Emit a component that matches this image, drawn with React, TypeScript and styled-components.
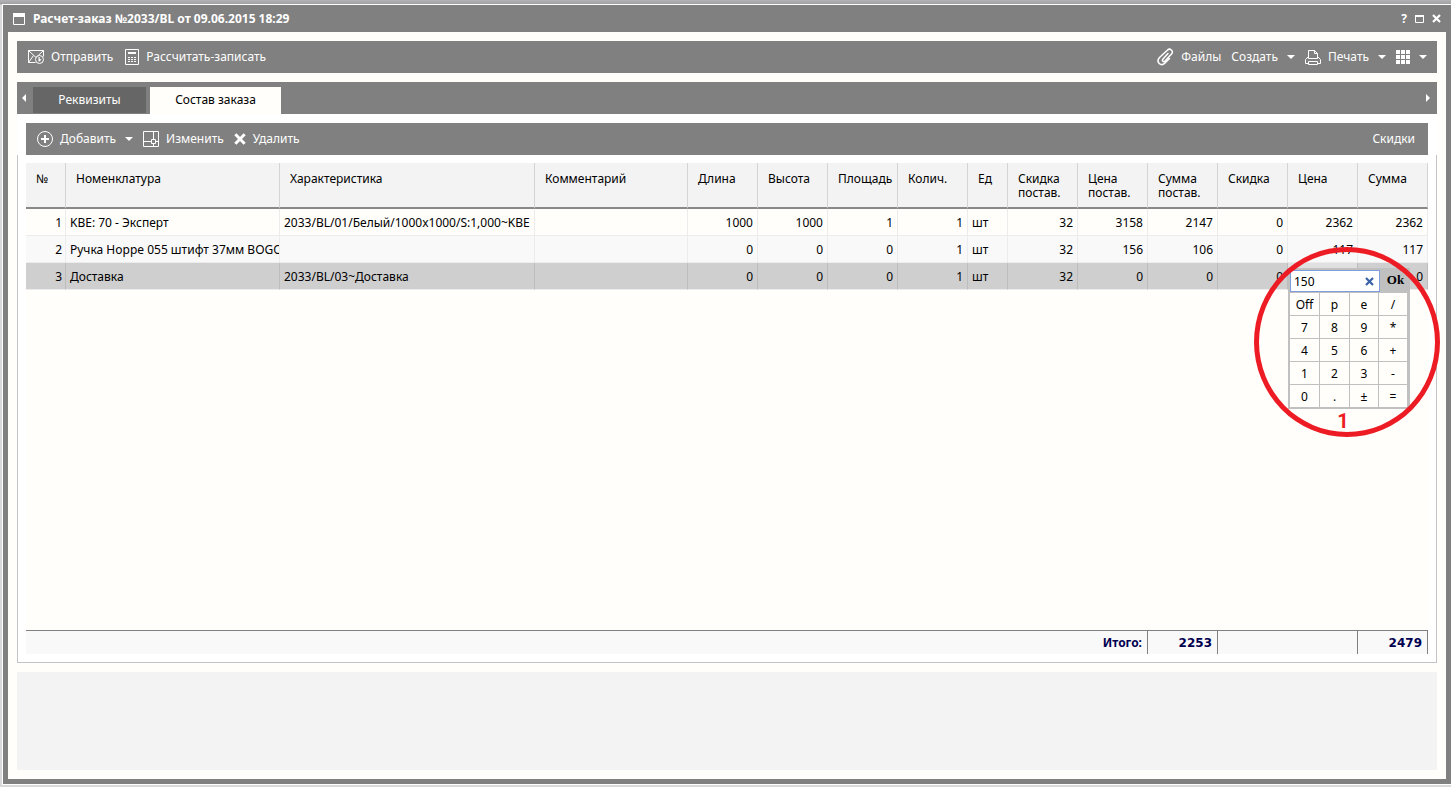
import React, { useState } from "react";
import styled, { createGlobalStyle, css } from "styled-components";

const GlobalStyle = createGlobalStyle`
  * { box-sizing: border-box; }
  html, body { margin: 0; padding: 0; }
  body {
    background: #d9d9db;
    font-family: "Noto Sans", "Open Sans", sans-serif;
    font-size: 12px;
    line-height: 14px;
    color: #000;
  }
  button, input { font: inherit; color: inherit; }
`;

const Desktop = styled.div`
  min-height: 100vh;
  display: flex;
  padding: 4px 0 2px 2px;
  background: linear-gradient(#b4b4b8, #a0a0a0 4px, #d9d9db 5px);
`;

const Window = styled.main`
  flex: 1;
  min-width: 0;
  display: flex;
  flex-direction: column;
  background: #808080;
  border: 1px solid #fff;
  border-right: 0;
  padding: 0 5px 5px;
`;

const TitleBar = styled.header`
  height: 27px;
  display: flex;
  align-items: center;
  gap: 8px;
  padding: 0 5px;
  color: #fff;
`;

const Title = styled.h1`
  flex: 1;
  margin: 0;
  font-size: 12px;
  font-weight: 700;
  line-height: 14px;
`;

const WindowButton = styled.button`
  display: flex;
  padding: 0;
  border: 0;
  background: none;
  color: #fff;
  font-weight: 700;
`;

const Body = styled.div`
  flex: 1;
  display: flex;
  flex-direction: column;
  gap: 9px;
  padding: 9px;
  background: #fffefa;
`;

const Toolbar = styled.div<{ $end?: number }>`
  height: 32px;
  display: flex;
  align-items: center;
  justify-content: space-between;
  padding: 0 ${(p) => p.$end ?? 10}px 0 11px;
  background: #808080;
  color: #fff;
`;

const ToolGroup = styled.div<{ $gap?: number }>`
  display: flex;
  align-items: center;
  gap: ${(p) => p.$gap ?? 10}px;
`;

const ToolButton = styled.button`
  display: flex;
  align-items: center;
  gap: 7px;
  padding: 0;
  border: 0;
  background: none;
  color: #fff;
  white-space: nowrap;
`;

const Caret = styled.span`
  margin-left: 2px;
  border: 4px solid transparent;
  border-top-color: #fff;
  border-bottom: 0;
`;

const Tabs = styled.section`
  flex: 1;
  display: flex;
  flex-direction: column;
`;

const TabStrip = styled.div`
  height: 32px;
  display: flex;
  align-items: flex-end;
  background: #808080;
`;

const TabList = styled.div`
  flex: 1;
  display: flex;
  align-items: flex-end;
  gap: 4px;
`;

const Scroller = styled.button<{ $side: "left" | "right" }>`
  width: 16px;
  height: 32px;
  display: flex;
  align-items: center;
  justify-content: center;
  padding: 0 2px 0 0;
  border: 0;
  background: none;

  &::before {
    content: "";
    border: 4px solid transparent;
    ${(p) =>
      p.$side === "left"
        ? css`border-right-color: #fff; border-left: 0;`
        : css`border-left-color: #fff; border-right: 0;`}
  }
`;

const Tab = styled.button<{ $active?: boolean }>`
  height: ${(p) => (p.$active ? 27 : 26)}px;
  min-width: ${(p) => (p.$active ? 131 : 113)}px;
  margin-bottom: ${(p) => (p.$active ? 0 : 1)}px;
  padding: 0 16px ${(p) => (p.$active ? 2 : 0)}px;
  border: 0;
  background: ${(p) => (p.$active ? "#fffefa" : "#666")};
  color: ${(p) => (p.$active ? "#000" : "#fff")};
`;

const PanelHead = styled.div`
  padding: 9px 9px 0;
  background: #fff;
`;

const PanelBody = styled.div`
  flex: 1;
  display: flex;
  flex-direction: column;
  padding: 8px;
  background: #fff;
  border: 1px solid #c3c3c8;
  border-top: 0;
`;

const GridArea = styled.div`
  flex: 1;
  background: #fffefa;
`;

const Table = styled.table`
  width: 100%;
  table-layout: fixed;
  border-collapse: separate;
  border-spacing: 0;
`;

const Th = styled.th`
  height: 46px;
  padding: 9px 0 0 10px;
  vertical-align: top;
  text-align: left;
  font-weight: 400;
  background: #f3f3f3;
  border-right: 1px solid #d4d4d4;
  border-bottom: 2px solid #888;
`;

const Row = styled.tr<{ $tone: string; $line: string }>`
  background: ${(p) => p.$tone};
  --line: ${(p) => p.$line};
`;

const Td = styled.td<{ $num?: boolean; $editing?: boolean }>`
  position: relative;
  height: 27px;
  padding: 2px 4px 0;
  text-align: ${(p) => (p.$num ? "right" : "left")};
  white-space: nowrap;
  overflow: ${(p) => (p.$editing ? "visible" : "hidden")};
  background: ${(p) => (p.$editing ? "#e0e0e0" : "transparent")};
  border-right: 1px solid var(--line);
  border-bottom: 1px solid #ececec;

  &:first-child { padding-right: 3px; }
`;

const TotalCell = styled.td`
  height: 24px;
  padding: 0 5px;
  text-align: right;
  font-family: "DejaVu Sans", sans-serif;
  font-weight: 700;
  color: #000050;
  background: #f9f9f9;
  border-top: 1px solid #808080;
  border-right: 1px solid #808080;
`;

const TotalLabel = styled.span`
  font-family: "Noto Sans", sans-serif;
`;

const Footer = styled.footer`
  height: 98px;
  background: #f3f3f3;
`;

const Calculator = styled.div`
  position: absolute;
  z-index: 1;
  top: 5px;
  left: 0;
  width: 122px;
  padding: 2px 3px 2px 2px;
  background: #c0c0c0;
`;

const CalcTop = styled.div`
  display: flex;
  height: 23px;
`;

const CalcField = styled.div`
  display: flex;
  align-items: center;
  width: 90px;
  height: 22px;
  padding: 1px 5px 0 3px;
  background: #fff;
  border: 1px solid #7f9ddb;
`;

const CalcInput = styled.input`
  flex: 1;
  min-width: 0;
  padding: 0;
  border: 0;
  outline: 0;
  background: none;
`;

const ClearButton = styled.button`
  display: flex;
  padding: 0;
  border: 0;
  background: none;
`;

const OkButton = styled.button`
  flex: 1;
  padding: 0 0 4px 4px;
  border: 0;
  background: none;
  font-family: "Liberation Serif", serif;
  font-size: 13px;
  font-weight: 700;
`;

const Keys = styled.div`
  display: grid;
  grid-template-columns: 29px 29px 28px 28px;
  grid-auto-rows: 22px;
  gap: 1px;
`;

const Key = styled.button`
  padding: 2px 0 0;
  border: 0;
  background: #fffefa;
`;

const Ring = styled.div`
  position: absolute;
  z-index: 2;
  top: -16px;
  left: -34px;
  width: 186px;
  height: 190px;
  display: flex;
  align-items: flex-end;
  justify-content: center;
  padding-right: 8px;
  border: 5px solid #ed1c24;
  border-radius: 50%;
  pointer-events: none;
  font: 700 20px/22px Roboto, sans-serif;
  color: #ed1c24;
`;

const stroke = { fill: "none", stroke: "#fff", strokeWidth: 1 };

const WindowIcon = () => (
  <svg width="12" height="12" viewBox="0 0 12 12"><path {...stroke} d="M.5 .5h11v11H.5z" /><path fill="#fff" d="M0 0h12v4H0z" /></svg>
);
const MaximizeIcon = () => (
  <svg width="9" height="8" viewBox="0 0 9 8"><path {...stroke} d="M.5 .5h8v7h-8z" /><path fill="#fff" d="M0 0h9v2H0z" /></svg>
);
const CrossIcon = ({ size, color = "#fff" }: { size: number; color?: string }) => (
  <svg width={size} height={size} viewBox="0 0 9 9"><path fill="none" stroke={color} strokeWidth="2.2" d="M1 1l7 7M8 1L1 8" /></svg>
);
const MailIcon = () => (
  <svg width="16" height="14" viewBox="0 0 16 14">
    <path {...stroke} d="M7.500 12.500H.5V.5h15v6M.5 .5L8 7.500l7.500-7M.5 12.500l5-7" />
    <circle fill="#808080" stroke="#fff" cx="11.500" cy="9.500" r="4" />
    <path fill="#fff" d="M10.500 7h1.200v2l1.800.5-2 2h-1z" />
  </svg>
);
const CalculatorIcon = () => (
  <svg width="14" height="16" viewBox="0 0 14 16">
    <path {...stroke} d="M.5 .5h13v15H.5z" />
    <path fill="#fff" d="M3 3h8v2H3zM3 8h2v1H3zM6 8h2v1H6zM9 8h2v1H9zM3 10h2v1H3zM6 10h2v1H6zM9 10h2v1H9zM3 12h2v1H3zM6 12h2v1H6zM9 12h2v1H9z" />
  </svg>
);
const ClipIcon = () => (
  <svg width="17" height="18" viewBox="0 0 17 18">
    <path fill="none" stroke="#fff" strokeWidth="1.500" strokeLinecap="round" d="M11 5.500l-5 5.500c-1.500 1.800.5 3.500 2 2l6.500-7c2.500-3-1.500-6.500-4.200-3.800L2.500 9.500c-4 4.500 1.500 9.500 5.500 5.500l4.500-4.500" />
  </svg>
);
const PrinterIcon = () => (
  <svg width="16" height="15" viewBox="0 0 16 15">
    <path {...stroke} d="M3.500 8.500v-8h6l3 3v5zM9.500 .5v3h3M3.500 6.500l-3 3v4h3M12.500 6.500l3 3v4h-3M3.500 11.500h9v3h-9z" />
  </svg>
);
const TilesIcon = () => (
  <svg width="14" height="14" viewBox="0 0 14 14">
    <path fill="#fff" d="M0 0h4v4H0zM5 0h4v4H5zM10 0h4v4h-4zM0 5h4v4H0zM5 5h4v4H5zM10 5h4v4h-4zM0 10h4v4H0zM5 10h4v4H5zM10 10h4v4h-4z" />
  </svg>
);
const PlusIcon = () => (
  <svg width="16" height="16" viewBox="0 0 16 16">
    <circle {...stroke} cx="8" cy="8" r="7.500" /><path fill="none" stroke="#fff" strokeWidth="2" d="M8 4v8M4 8h8" />
  </svg>
);
const EditIcon = () => (
  <svg width="16" height="16" viewBox="0 0 16 16">
    <path {...stroke} d="M.5 .5h15v15H.5zM10.500 .5v8M.5 10.500h8M8.500 8.500h4v4h-4zM10.500 12.500v3M12.500 10.500h3" />
  </svg>
);

const columns: { title: string; width?: number; num?: boolean }[] = [
  { title: "№", width: 40, num: true },
  { title: "Номенклатура", width: 214 },
  { title: "Характеристика", width: 255 },
  { title: "Комментарий" },
  { title: "Длина", width: 70, num: true },
  { title: "Высота", width: 70, num: true },
  { title: "Площадь", width: 70, num: true },
  { title: "Колич.", width: 70, num: true },
  { title: "Ед", width: 40 },
  { title: "Скидка постав.", width: 70, num: true },
  { title: "Цена постав.", width: 70, num: true },
  { title: "Сумма постав.", width: 70, num: true },
  { title: "Скидка", width: 70, num: true },
  { title: "Цена", width: 70, num: true },
  { title: "Сумма", width: 70, num: true },
];

const rows = [
  ["1", "KBE: 70 - Эксперт", "2033/BL/01/Белый/1000x1000/S:1,000~KBE", "", "1000", "1000", "1", "1", "шт", "32", "3158", "2147", "0", "2362", "2362"],
  ["2", "Ручка Hoppe 055 штифт 37мм BOGOTA", "", "", "0", "0", "0", "1", "шт", "32", "156", "106", "0", "117", "117"],
  ["3", "Доставка", "2033/BL/03~Доставка", "", "0", "0", "0", "1", "шт", "32", "0", "0", "0", "", "0"],
];
const tones = [
  ["#fffefa", "#ececec"],
  ["#f9f9f9", "#ececec"],
  ["#cfcfcf", "#bdbdbd"],
];

const keys = ["Off", "p", "e", "/", "7", "8", "9", "*", "4", "5", "6", "+", "1", "2", "3", "-", "0", ".", "±", "="];

const Columns = () => (
  <colgroup>
    {columns.map((c, i) => <col key={i} width={c.width} />)}
  </colgroup>
);

const PriceEditor = () => {
  const [value, setValue] = useState("150");
  return (
    <Calculator>
      <CalcTop>
        <CalcField>
          <CalcInput aria-label="Цена" value={value} onChange={(e) => setValue(e.target.value)} />
          <ClearButton aria-label="Очистить" onClick={() => setValue("")}><CrossIcon size={9} color="#3b62a8" /></ClearButton>
        </CalcField>
        <OkButton>Ok</OkButton>
      </CalcTop>
      <Keys>
        {keys.map((k) => <Key key={k}>{k}</Key>)}
      </Keys>
    </Calculator>
  );
};

export default function App() {
  return (
    <>
      <GlobalStyle />
      <Desktop>
        <Window>
          <TitleBar>
            <WindowIcon />
            <Title>Расчет-заказ №2033/BL от 09.06.2015 18:29</Title>
            <WindowButton>?</WindowButton>
            <WindowButton aria-label="Развернуть"><MaximizeIcon /></WindowButton>
            <WindowButton aria-label="Закрыть"><CrossIcon size={9} /></WindowButton>
          </TitleBar>
          <Body>
            <Toolbar>
              <ToolGroup $gap={12}>
                <ToolButton><MailIcon />Отправить</ToolButton>
                <ToolButton><CalculatorIcon />Рассчитать-записать</ToolButton>
              </ToolGroup>
              <ToolGroup>
                <ToolButton><ClipIcon />Файлы</ToolButton>
                <ToolButton>Создать<Caret /></ToolButton>
                <ToolButton><PrinterIcon />Печать<Caret /></ToolButton>
                <ToolButton aria-label="Вид"><TilesIcon /><Caret /></ToolButton>
              </ToolGroup>
            </Toolbar>
            <Tabs>
              <TabStrip>
                <Scroller $side="left" aria-label="Назад" />
                <TabList role="tablist">
                  <Tab role="tab" aria-selected={false}>Реквизиты</Tab>
                  <Tab role="tab" aria-selected $active>Состав заказа</Tab>
                </TabList>
                <Scroller $side="right" aria-label="Вперед" />
              </TabStrip>
              <PanelHead>
                <Toolbar $end={13}>
                  <ToolGroup>
                    <ToolButton><PlusIcon />Добавить<Caret /></ToolButton>
                    <ToolButton><EditIcon />Изменить</ToolButton>
                    <ToolButton><CrossIcon size={12} />Удалить</ToolButton>
                  </ToolGroup>
                  <ToolButton>Скидки</ToolButton>
                </Toolbar>
              </PanelHead>
              <PanelBody>
                <GridArea>
                  <Table>
                    <Columns />
                    <thead>
                      <tr>{columns.map((c, i) => <Th key={i} scope="col">{c.title}</Th>)}</tr>
                    </thead>
                    <tbody>
                      {rows.map((row, r) => (
                        <Row key={r} $tone={tones[r][0]} $line={tones[r][1]}>
                          {row.map((value, c) => {
                            const editing = r === 2 && c === 13;
                            return (
                              <Td key={c} $num={columns[c].num} $editing={editing}>
                                {editing ? <><PriceEditor /><Ring>1</Ring></> : value}
                              </Td>
                            );
                          })}
                        </Row>
                      ))}
                    </tbody>
                  </Table>
                </GridArea>
                <Table>
                  <Columns />
                  <tbody>
                    <tr>
                      <TotalCell colSpan={11}><TotalLabel>Итого:</TotalLabel></TotalCell>
                      <TotalCell>2253</TotalCell>
                      <TotalCell colSpan={2} />
                      <TotalCell>2479</TotalCell>
                    </tr>
                  </tbody>
                </Table>
              </PanelBody>
            </Tabs>
            <Footer />
          </Body>
        </Window>
      </Desktop>
    </>
  );
}
